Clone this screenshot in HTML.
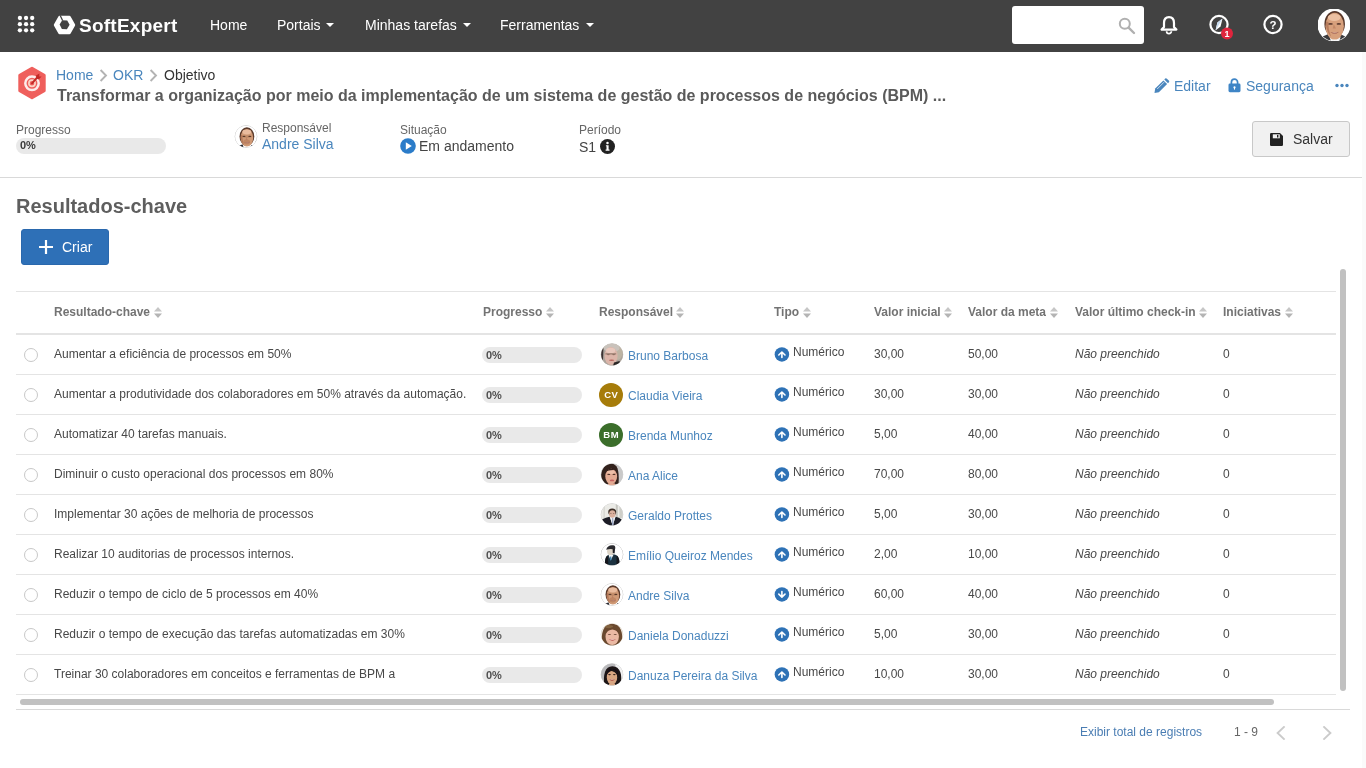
<!DOCTYPE html>
<html lang="pt-BR">
<head>
<meta charset="utf-8">
<title>OKR - Objetivo</title>
<style>
*{box-sizing:border-box;margin:0;padding:0}
html,body{width:1366px;height:768px;overflow:hidden;background:#fff}
body{font-family:"Liberation Sans",sans-serif;color:#444;font-size:12px;position:relative;will-change:transform}
a{text-decoration:none;color:#4a86bd}
.abs{position:absolute;white-space:nowrap}
#nav{position:absolute;left:0;top:0;width:1366px;height:52px;background:#424242}
#nav .mi{position:absolute;top:17px;font-size:14px;line-height:16px;color:#fff;white-space:nowrap}
#nav .caret{position:absolute;top:23px;width:0;height:0;border-left:4px solid transparent;border-right:4px solid transparent;border-top:4px solid #fff}
#brand{position:absolute;left:79px;top:14px;font-size:19px;line-height:24px;font-weight:bold;color:#fff;letter-spacing:0.25px}
#search{position:absolute;left:1012px;top:6px;width:132px;height:38px;background:#fff;border-radius:3px}
.lbl{position:absolute;font-size:12px;line-height:14px;color:#666;white-space:nowrap}
.val{position:absolute;font-size:14px;line-height:16px;color:#444;white-space:nowrap}
.pbar{position:absolute;height:16px;border-radius:8px;background:#e9e9e9;font-size:11px;font-weight:bold;line-height:16px;color:#505050;padding-left:4px}
#hsep{position:absolute;left:0;top:177px;width:1366px;height:1px;background:#d9d9d9}
.hl{position:absolute;left:16px;width:1320px;height:1px;background:#e4e4e4}
.th{position:absolute;top:305px;font-size:12px;line-height:14px;font-weight:bold;color:#737373;white-space:nowrap}
.sort{position:absolute;top:307px;width:8px;height:11px}
.row{position:absolute;left:16px;width:1320px;height:40px}
.row .c{position:absolute;top:12px;font-size:12px;line-height:14px;color:#484848;white-space:nowrap}
.row .radio{position:absolute;left:8px;top:13px;width:14px;height:14px;border:1px solid #c8c8c8;border-radius:50%;background:#fff}
.row .pbar{left:466px;top:12px;width:100px}
.row .av{position:absolute;left:584px;top:8px;width:24px;height:24px}
.row .ini{left:583px}
.row .ini{border-radius:50%;color:#fff;font-weight:bold;font-size:9.5px;letter-spacing:0.5px;padding-left:0.5px;line-height:24px;text-align:center}
.row .nm{position:absolute;left:612px;top:14px;font-size:12px;line-height:14px;color:#4a86bd;white-space:nowrap}
.row .ti{position:absolute;left:758px;top:12px;width:16px;height:16px}
.row .tt{position:absolute;left:777px;top:10px;font-size:12px;line-height:14px;color:#484848}
</style>
</head>
<body>
<div id="nav">
  <svg class="abs" style="left:17px;top:15px" width="18" height="18" viewBox="0 0 18 18"><g fill="#fff"><circle cx="2.9" cy="3.0" r="2.15"/><circle cx="9.05" cy="3.0" r="2.15"/><circle cx="15.200000000000001" cy="3.0" r="2.15"/><circle cx="2.9" cy="9.15" r="2.15"/><circle cx="9.05" cy="9.15" r="2.15"/><circle cx="15.200000000000001" cy="9.15" r="2.15"/><circle cx="2.9" cy="15.3" r="2.15"/><circle cx="9.05" cy="15.3" r="2.15"/><circle cx="15.200000000000001" cy="15.3" r="2.15"/></g></svg>
  <svg class="abs" style="left:53px;top:15px" width="23" height="20" viewBox="0 0 23 20"><path d="M6.6 0.8 L16.4 0.8 Q17.2 0.8 17.6 1.5 L22 9.3 Q22.4 10 22 10.7 L17.6 18.5 Q17.2 19.2 16.4 19.2 L6.6 19.2 Q5.8 19.2 5.4 18.5 L1 10.7 Q0.6 10 1 9.3 L5.4 1.5 Q5.8 0.8 6.6 0.8 Z" fill="#fff"/><path d="M9.2 5.3 L14.2 5.5 L16.6 9.8 L13.9 14.2 L8.9 14 L6.6 9.6 Z" fill="#424242"/><path d="M7.2 0.4 L9.6 5.6" stroke="#424242" stroke-width="1.3"/></svg>
  <div id="brand">SoftExpert</div>
  <div class="mi" style="left:210px">Home</div>
  <div class="mi" style="left:277px">Portais</div><div class="caret" style="left:326px"></div>
  <div class="mi" style="left:365px">Minhas tarefas</div><div class="caret" style="left:463px"></div>
  <div class="mi" style="left:500px">Ferramentas</div><div class="caret" style="left:586px"></div>
  <div id="search"><svg class="abs" style="left:106px;top:11px" width="18" height="18" viewBox="0 0 18 18"><circle cx="6.8" cy="6.8" r="5" fill="none" stroke="#b0b0b0" stroke-width="2"/><path d="M10.6 10.6 L16 16" stroke="#b0b0b0" stroke-width="2.4" stroke-linecap="round"/></svg></div>
  <svg class="abs" style="left:1159px;top:15px" width="20" height="21" viewBox="0 0 20 21"><path d="M10 2.2 C6.6 2.2 5 4.8 5 8 L5 12 L2.6 14.6 L17.4 14.6 L15 12 L15 8 C15 4.8 13.4 2.2 10 2.2 Z" fill="none" stroke="#fff" stroke-width="2.2" stroke-linejoin="round"/><path d="M7.6 16.2 A2.4 2.4 0 0 0 12.4 16.2" fill="none" stroke="#fff" stroke-width="1.7"/></svg>
  <svg class="abs" style="left:1208px;top:14px" width="26" height="26" viewBox="0 0 26 26"><circle cx="11" cy="10.5" r="8.6" fill="none" stroke="#fff" stroke-width="2.2"/><path d="M14.5 4.5 L12.6 12.4 L7.5 16.5 L9.4 8.6 Z" fill="#fff"/><path d="M14.5 4.5 L7.5 16.5 L9.4 8.6 Z" fill="#c4d9ee"/><circle cx="19" cy="19.6" r="6" fill="#e0243d"/><text x="19" y="22.9" font-family="Liberation Sans" font-weight="bold" font-size="9" fill="#fff" text-anchor="middle">1</text></svg>
  <svg class="abs" style="left:1262px;top:14px" width="22" height="22" viewBox="0 0 22 22"><circle cx="11" cy="10.5" r="8.6" fill="none" stroke="#fff" stroke-width="2.2"/><text x="11" y="14.6" font-family="Liberation Sans" font-weight="bold" font-size="11.5" fill="#fff" text-anchor="middle">?</text></svg>
  <svg class="abs" style="left:1318px;top:9px" width="32" height="32" viewBox="0 0 24 24"><defs><clipPath id="knav"><circle cx="12" cy="12" r="11.9"/></clipPath><filter id="fnav" x="-10%" y="-10%" width="120%" height="120%"><feGaussianBlur stdDeviation="0.42"/></filter></defs><circle cx="12" cy="12" r="11.9" fill="#fff" stroke="#fff" stroke-width="1"/><g clip-path="url(#knav)"><g filter="url(#fnav)"><rect width="24" height="24" fill="#fff"/><path d="M2 24 L3.4 20.6 L8.4 18.6 L10.2 24 Z" fill="#3a3a3e"/><path d="M22 24 L20.8 20.8 L17 19 L15.6 24 Z" fill="#3a3a3e"/><path d="M8.6 20.6 L12.4 24 L17 20.8 L16 24 L9.6 24 Z" fill="#f4f4f4"/><ellipse cx="12.5" cy="11.3" rx="7.7" ry="9.8" fill="#57372a"/><ellipse cx="12.5" cy="12.9" rx="6.9" ry="10" fill="#d7a07c"/><ellipse cx="12.2" cy="6.4" rx="4.8" ry="2.6" fill="#ecc0a2"/><path d="M6 9.6 C5.8 14 7 18 9.8 20.6 C8.2 17 7.8 13.4 7.8 9.6 Z" fill="#a8694c" opacity="0.65"/><ellipse cx="9.4" cy="11.2" rx="1.7" ry="0.65" fill="#4a2c22" opacity="0.85"/><ellipse cx="15.6" cy="11.2" rx="1.7" ry="0.65" fill="#4a2c22" opacity="0.85"/><path d="M11.8 11.4 L11.1 14.6 L13.5 14.6 Z" fill="#b87858" opacity="0.6"/><path d="M9.2 17.3 Q12.6 19.8 15.8 17.1 Q12.6 18.4 9.2 17.3 Z" fill="#8c4038"/><path d="M10 17.7 Q12.6 18.7 15 17.6 Q12.6 18 10 17.7 Z" fill="#f6ece6"/></g></g></svg>
</div>
<svg class="abs" style="left:17px;top:66px" width="30" height="34" viewBox="0 0 30 34"><path d="M15 2.2 L27.2 9.3 L27.2 24.7 L15 31.8 L2.8 24.7 L2.8 9.3 Z" fill="#ef5f5c" stroke="#ef5f5c" stroke-width="3" stroke-linejoin="round"/><circle cx="15" cy="17.3" r="6.7" fill="none" stroke="#fdeceb" stroke-width="2.5"/><circle cx="15" cy="17.3" r="3.1" fill="none" stroke="#fbd5c6" stroke-width="1.7"/><path d="M15 17.3 L20.6 11" stroke="#c22a26" stroke-width="1.9" stroke-linecap="round"/><path d="M19 9.6 L22.4 7.6 L22.2 10.4 L24.6 10.6 L21.6 13.6 L19.6 12.6 Z" fill="#c22a26"/></svg>
<div class="abs" style="left:56px;top:67px;font-size:14px;line-height:16px"><a>Home</a></div>
<svg class="abs" style="left:99px;top:69px" width="9" height="13" viewBox="0 0 9 13"><path d="M1.6 1 L7 6.5 L1.6 12" fill="none" stroke="#b3b3b3" stroke-width="1.9"/></svg>
<div class="abs" style="left:113px;top:67px;font-size:14px;line-height:16px"><a>OKR</a></div>
<svg class="abs" style="left:149px;top:69px" width="9" height="13" viewBox="0 0 9 13"><path d="M1.6 1 L7 6.5 L1.6 12" fill="none" stroke="#b3b3b3" stroke-width="1.9"/></svg>
<div class="abs" style="left:164px;top:67px;font-size:14px;line-height:16px;color:#333">Objetivo</div>
<div class="abs" style="left:57px;top:86px;font-size:16px;line-height:19px;font-weight:bold;color:#5a5a5a">Transformar a organização por meio da implementação de um sistema de gestão de processos de negócios (BPM) ...</div>
<svg class="abs" style="left:1154px;top:78px" width="16" height="16" viewBox="0 0 16 16"><path d="M0.5 15 L1.2 10.6 L9.4 2.4 L13.1 6.1 L4.9 14.3 Z" fill="#4a86bd"/><path d="M10.3 1.5 L11.2 0.6 Q12 -0.1 12.9 0.7 L14.8 2.6 Q15.6 3.4 14.9 4.3 L14 5.2 Z" fill="#4a86bd"/><path d="M3.2 11 L10 4.2" stroke="#dbe7f3" stroke-width="0.9"/></svg>
<div class="abs" style="left:1174px;top:78px;font-size:14px;line-height:16px"><a>Editar</a></div>
<svg class="abs" style="left:1228px;top:77px" width="13" height="16" viewBox="0 0 13 16"><path d="M3.4 7 L3.4 5.2 A3.1 3.1 0 0 1 9.6 5.2 L9.6 7" fill="none" stroke="#3f85c6" stroke-width="1.7"/><rect x="0.5" y="6.6" width="12" height="8.6" rx="1.4" fill="#3f85c6"/><circle cx="6.5" cy="10.4" r="1.1" fill="#fff"/><rect x="6" y="10.4" width="1" height="2.2" fill="#fff"/></svg>
<div class="abs" style="left:1246px;top:78px;font-size:14px;line-height:16px"><a>Segurança</a></div>
<svg class="abs" style="left:1335px;top:83px" width="14" height="5" viewBox="0 0 14 5"><circle cx="2" cy="2.5" r="1.7" fill="#4a86bd"/><circle cx="7" cy="2.5" r="1.7" fill="#4a86bd"/><circle cx="12" cy="2.5" r="1.7" fill="#4a86bd"/></svg>
<div class="lbl" style="left:16px;top:123px">Progresso</div>
<div class="pbar" style="left:16px;top:138px;width:150px;line-height:15px;color:#3a3a3a">0%</div>
<svg class="abs" style="left:234px;top:125px" width="24" height="24" viewBox="0 0 24 24"><defs><clipPath id="khdr"><circle cx="12" cy="11.5" r="10.8"/></clipPath><filter id="fhdr" x="-10%" y="-10%" width="120%" height="120%"><feGaussianBlur stdDeviation="0.5"/></filter></defs><circle cx="12" cy="11.5" r="10.8" fill="#fff" stroke="#c2c2c2" stroke-width="1"/><g clip-path="url(#khdr)"><g filter="url(#fhdr)"><rect width="24" height="24" fill="#fff"/><path d="M3 24 L3.6 21.6 L8.6 19.2 L10 24 Z" fill="#2a2c33"/><path d="M21.5 24 L21 21.8 L17.4 20 L16.6 24 Z" fill="#2a2c33"/><ellipse cx="12.9" cy="11.4" rx="7.4" ry="9.2" fill="#5a3a2c"/><ellipse cx="12.9" cy="12.8" rx="6.3" ry="8.8" fill="#d09a76"/><ellipse cx="12.8" cy="7" rx="4.4" ry="2.4" fill="#eabc9e"/><ellipse cx="12.9" cy="11.6" rx="5.2" ry="1.3" fill="#8a5638" opacity="0.22"/><ellipse cx="12.6" cy="17" rx="3.4" ry="2.4" fill="#a8684a" opacity="0.4"/><path d="M6.8 10 C6.6 14 7.6 18.4 10.4 21 C8.8 17.4 8.4 13.6 8.4 10 Z" fill="#a8694c" opacity="0.7"/><ellipse cx="10.0" cy="11.4" rx="1.5" ry="0.6" fill="#4a2c22" opacity="0.85"/><ellipse cx="15.8" cy="11.4" rx="1.5" ry="0.6" fill="#4a2c22" opacity="0.85"/><path d="M12.3 12 L11.6 15 L13.8 15 Z" fill="#b87858" opacity="0.6"/><path d="M9.9 16.9 Q13 19.2 16.1 16.7 Q13 18 9.9 16.9 Z" fill="#8c4038"/><path d="M10.6 17.3 Q13 18.2 15.4 17.2 Q13 17.6 10.6 17.3 Z" fill="#f2e4dc"/></g></g></svg>
<div class="lbl" style="left:262px;top:121px">Responsável</div>
<div class="val" style="left:262px;top:136px"><a>Andre Silva</a></div>
<div class="lbl" style="left:400px;top:123px">Situação</div>
<svg class="abs" style="left:400px;top:138px" width="16" height="16" viewBox="0 0 16 16"><circle cx="8" cy="8" r="7.8" fill="#2b7cc9"/><path d="M5.8 4.2 L11.8 8 L5.8 11.8 Z" fill="#fff"/></svg>
<div class="val" style="left:419px;top:138px">Em andamento</div>
<div class="lbl" style="left:579px;top:123px">Período</div>
<div class="val" style="left:579px;top:139px">S1</div>
<svg class="abs" style="left:600px;top:139px" width="15" height="15" viewBox="0 0 15 15"><circle cx="7.5" cy="7.5" r="7.5" fill="#222"/><circle cx="7.5" cy="3.9" r="1.25" fill="#fff"/><path d="M5.9 6.2 L8.6 6.2 L8.6 10.6 L9.5 10.6 L9.5 11.7 L5.6 11.7 L5.6 10.6 L6.5 10.6 L6.5 7.3 L5.9 7.3 Z" fill="#fff"/></svg>
<div class="abs" style="left:1252px;top:121px;width:98px;height:36px;border:1px solid #c8c8c8;border-radius:3px;background:#f1f1f1"></div>
<svg class="abs" style="left:1270px;top:133px" width="13" height="13" viewBox="0 0 13 13"><path d="M1.2 0 L10 0 L13 3 L13 11.8 Q13 13 11.8 13 L1.2 13 Q0 13 0 11.8 L0 1.2 Q0 0 1.2 0 Z" fill="#222"/><rect x="2.8" y="1.3" width="7" height="4" fill="#f1f1f1"/><rect x="7" y="1.9" width="1.4" height="2.6" fill="#222"/></svg>
<div class="abs" style="left:1293px;top:131px;font-size:14px;line-height:16px;color:#333">Salvar</div>
<div id="hsep"></div>
<div class="abs" style="left:16px;top:194px;font-size:20px;line-height:24px;font-weight:bold;color:#5e5e5e">Resultados-chave</div>
<div class="abs" style="left:21px;top:229px;width:88px;height:36px;background:#2e70b7;border:1px solid #2a68ad;border-radius:3px"></div>
<svg class="abs" style="left:39px;top:240px" width="14" height="14" viewBox="0 0 14 14"><path d="M7 0 L7 14 M0 7 L14 7" stroke="#fff" stroke-width="2.2"/></svg>
<div class="abs" style="left:62px;top:239px;font-size:14px;line-height:16px;color:#fff">Criar</div>
<div class="hl" style="top:291px"></div>
<div class="th" style="left:54px">Resultado-chave</div><svg class="sort" style="left:154px" viewBox="0 0 8 11"><path d="M4 0 L8 4.5 L0 4.5 Z" fill="#c6c6c6"/><path d="M4 11 L8 6.5 L0 6.5 Z" fill="#b4b4b4"/></svg>
<div class="th" style="left:483px">Progresso</div><svg class="sort" style="left:546px" viewBox="0 0 8 11"><path d="M4 0 L8 4.5 L0 4.5 Z" fill="#c6c6c6"/><path d="M4 11 L8 6.5 L0 6.5 Z" fill="#b4b4b4"/></svg>
<div class="th" style="left:599px">Responsável</div><svg class="sort" style="left:676px" viewBox="0 0 8 11"><path d="M4 0 L8 4.5 L0 4.5 Z" fill="#c6c6c6"/><path d="M4 11 L8 6.5 L0 6.5 Z" fill="#b4b4b4"/></svg>
<div class="th" style="left:774px">Tipo</div><svg class="sort" style="left:803px" viewBox="0 0 8 11"><path d="M4 0 L8 4.5 L0 4.5 Z" fill="#c6c6c6"/><path d="M4 11 L8 6.5 L0 6.5 Z" fill="#b4b4b4"/></svg>
<div class="th" style="left:874px">Valor inicial</div><svg class="sort" style="left:944px" viewBox="0 0 8 11"><path d="M4 0 L8 4.5 L0 4.5 Z" fill="#c6c6c6"/><path d="M4 11 L8 6.5 L0 6.5 Z" fill="#b4b4b4"/></svg>
<div class="th" style="left:968px">Valor da meta</div><svg class="sort" style="left:1050px" viewBox="0 0 8 11"><path d="M4 0 L8 4.5 L0 4.5 Z" fill="#c6c6c6"/><path d="M4 11 L8 6.5 L0 6.5 Z" fill="#b4b4b4"/></svg>
<div class="th" style="left:1075px">Valor último check-in</div><svg class="sort" style="left:1199px" viewBox="0 0 8 11"><path d="M4 0 L8 4.5 L0 4.5 Z" fill="#c6c6c6"/><path d="M4 11 L8 6.5 L0 6.5 Z" fill="#b4b4b4"/></svg>
<div class="th" style="left:1223px">Iniciativas</div><svg class="sort" style="left:1285px" viewBox="0 0 8 11"><path d="M4 0 L8 4.5 L0 4.5 Z" fill="#c6c6c6"/><path d="M4 11 L8 6.5 L0 6.5 Z" fill="#b4b4b4"/></svg>
<div class="hl" style="top:333px;height:2px"></div>
<div class="row" style="top:335px"><div class="radio"></div><div class="c" style="left:38px">Aumentar a eficiência de processos em 50%</div><div class="pbar">0%</div><svg class="av" style="" width="24" height="24" viewBox="0 0 24 24"><defs><clipPath id="kr1"><circle cx="12" cy="11.5" r="10.8"/></clipPath><filter id="fr1" x="-10%" y="-10%" width="120%" height="120%"><feGaussianBlur stdDeviation="0.55"/></filter></defs><circle cx="12" cy="11.5" r="10.8" fill="#aaa39b" stroke="#cfcac4" stroke-width="1"/><g clip-path="url(#kr1)"><g filter="url(#fr1)"><rect width="24" height="24" fill="#aaa39b"/><path d="M0 3 L3.4 5 L3 17 L0 20 Z" fill="#3a3232"/><ellipse cx="17.6" cy="9" rx="5" ry="8" fill="#bdb4a4"/><ellipse cx="11.6" cy="5" rx="8" ry="4.4" fill="#c9c2bb"/><ellipse cx="11" cy="13" rx="6.6" ry="9" fill="#dcb5a9"/><ellipse cx="10.6" cy="7.4" rx="4.6" ry="2.6" fill="#e8c8bd"/><path d="M14 19.6 L19.6 18 L21 23 L13 23 Z" fill="#2c2525"/><path d="M5.4 10.9 L16.2 10.9" stroke="#6e5a4c" stroke-width="0.9" opacity="0.85"/><ellipse cx="8.3" cy="11.6" rx="1.5" ry="0.7" fill="#7a5e50" opacity="0.7"/><ellipse cx="13.7" cy="11.6" rx="1.5" ry="0.7" fill="#7a5e50" opacity="0.7"/><ellipse cx="11.6" cy="17.2" rx="2.6" ry="0.8" fill="#b0524e" opacity="0.8"/></g></g></svg><div class="nm">Bruno Barbosa</div><svg class="ti" viewBox="0 0 16 16"><circle cx="7.9" cy="7.4" r="7.25" fill="#2e72b6"/><path d="M7.9 10.5 L7.9 5.6 M4.8 8 L7.9 5 L11 8" fill="none" stroke="#fff" stroke-width="1.6" stroke-linecap="round" stroke-linejoin="round"/></svg><div class="tt">Numérico</div><div class="c" style="left:858px">30,00</div><div class="c" style="left:952px">50,00</div><div class="c" style="left:1059px;font-style:italic">Não preenchido</div><div class="c" style="left:1207px">0</div></div>
<div class="hl" style="top:374px"></div>
<div class="row" style="top:375px"><div class="radio"></div><div class="c" style="left:38px">Aumentar a produtividade dos colaboradores em 50% através da automação.</div><div class="pbar">0%</div><div class="av ini" style="background:#a67c0a">CV</div><div class="nm">Claudia Vieira</div><svg class="ti" viewBox="0 0 16 16"><circle cx="7.9" cy="7.4" r="7.25" fill="#2e72b6"/><path d="M7.9 10.5 L7.9 5.6 M4.8 8 L7.9 5 L11 8" fill="none" stroke="#fff" stroke-width="1.6" stroke-linecap="round" stroke-linejoin="round"/></svg><div class="tt">Numérico</div><div class="c" style="left:858px">30,00</div><div class="c" style="left:952px">30,00</div><div class="c" style="left:1059px;font-style:italic">Não preenchido</div><div class="c" style="left:1207px">0</div></div>
<div class="hl" style="top:414px"></div>
<div class="row" style="top:415px"><div class="radio"></div><div class="c" style="left:38px">Automatizar 40 tarefas manuais.</div><div class="pbar">0%</div><div class="av ini" style="background:#3b6e2b">BM</div><div class="nm">Brenda Munhoz</div><svg class="ti" viewBox="0 0 16 16"><circle cx="7.9" cy="7.4" r="7.25" fill="#2e72b6"/><path d="M7.9 10.5 L7.9 5.6 M4.8 8 L7.9 5 L11 8" fill="none" stroke="#fff" stroke-width="1.6" stroke-linecap="round" stroke-linejoin="round"/></svg><div class="tt">Numérico</div><div class="c" style="left:858px">5,00</div><div class="c" style="left:952px">40,00</div><div class="c" style="left:1059px;font-style:italic">Não preenchido</div><div class="c" style="left:1207px">0</div></div>
<div class="hl" style="top:454px"></div>
<div class="row" style="top:455px"><div class="radio"></div><div class="c" style="left:38px">Diminuir o custo operacional dos processos em 80%</div><div class="pbar">0%</div><svg class="av" style="" width="24" height="24" viewBox="0 0 24 24"><defs><clipPath id="kr4"><circle cx="12" cy="11.5" r="10.8"/></clipPath><filter id="fr4" x="-10%" y="-10%" width="120%" height="120%"><feGaussianBlur stdDeviation="0.5"/></filter></defs><circle cx="12" cy="11.5" r="10.8" fill="#c9c9c9" stroke="#d2d2d2" stroke-width="1"/><g clip-path="url(#kr4)"><g filter="url(#fr4)"><rect width="24" height="24" fill="#c9c9c9"/><rect x="0" y="20.6" width="24" height="4" fill="#f6f6f6"/><path d="M1 21 C-0.5 10 3 0.6 11.4 0.8 C17 1 19.4 6 18.6 20.6 L15 21.4 L5 21.4 Z" fill="#33201c"/><ellipse cx="11.2" cy="13.6" rx="5.9" ry="7.8" fill="#e3aa92"/><ellipse cx="11" cy="9" rx="3.8" ry="2" fill="#eebfa8"/><path d="M5 9.4 C7 5.4 12 4.6 16.8 7.6 C14 6.6 8 7 5 9.4 Z" fill="#33201c"/><ellipse cx="8.8" cy="11.4" rx="1.5" ry="0.6" fill="#3a2018" opacity="0.85"/><ellipse cx="14.0" cy="11.4" rx="1.5" ry="0.6" fill="#3a2018" opacity="0.85"/><ellipse cx="12" cy="17.4" rx="2.2" ry="0.9" fill="#c25a5c" opacity="0.9"/><rect x="8" y="20.4" width="7" height="2.4" fill="#e3aa92"/></g></g></svg><div class="nm">Ana Alice</div><svg class="ti" viewBox="0 0 16 16"><circle cx="7.9" cy="7.4" r="7.25" fill="#2e72b6"/><path d="M7.9 10.5 L7.9 5.6 M4.8 8 L7.9 5 L11 8" fill="none" stroke="#fff" stroke-width="1.6" stroke-linecap="round" stroke-linejoin="round"/></svg><div class="tt">Numérico</div><div class="c" style="left:858px">70,00</div><div class="c" style="left:952px">80,00</div><div class="c" style="left:1059px;font-style:italic">Não preenchido</div><div class="c" style="left:1207px">0</div></div>
<div class="hl" style="top:494px"></div>
<div class="row" style="top:495px"><div class="radio"></div><div class="c" style="left:38px">Implementar 30 ações de melhoria de processos</div><div class="pbar">0%</div><svg class="av" style="" width="24" height="24" viewBox="0 0 24 24"><defs><clipPath id="kr5"><circle cx="12" cy="11.5" r="10.8"/></clipPath><filter id="fr5" x="-10%" y="-10%" width="120%" height="120%"><feGaussianBlur stdDeviation="0.45"/></filter></defs><circle cx="12" cy="11.5" r="10.8" fill="#ebebe7" stroke="#cfcfcf" stroke-width="1"/><g clip-path="url(#kr5)"><g filter="url(#fr5)"><rect width="24" height="24" fill="#ebebe7"/><rect x="15.8" y="0" width="2" height="15" fill="#c6c6c0"/><rect x="19.4" y="0" width="3.4" height="15" fill="#cfcfc9"/><rect x="3.4" y="0" width="1.6" height="15" fill="#dadad5"/><path d="M1.4 24 L1.8 16.6 Q6 14.2 9.6 13.8 L12.6 22 L15.6 13.8 Q19 14.4 22 16.8 L22.6 24 Z" fill="#1b1e26"/><path d="M10 13.8 L12.7 23 L15.4 13.8 Z" fill="#eef0f4"/><path d="M12.2 15 L13.2 15 L13.6 22 L12.7 23 L11.9 22 Z" fill="#9aa6c4"/><ellipse cx="12.2" cy="9" rx="4" ry="3.6" fill="#3d2f28"/><ellipse cx="12.3" cy="11" rx="3.2" ry="3.8" fill="#dbb09e"/><ellipse cx="10.9" cy="10.6" rx="0.8" ry="0.4" fill="#3a2a24" opacity="0.7"/><ellipse cx="13.700000000000001" cy="10.6" rx="0.8" ry="0.4" fill="#3a2a24" opacity="0.7"/></g></g></svg><div class="nm">Geraldo Prottes</div><svg class="ti" viewBox="0 0 16 16"><circle cx="7.9" cy="7.4" r="7.25" fill="#2e72b6"/><path d="M7.9 10.5 L7.9 5.6 M4.8 8 L7.9 5 L11 8" fill="none" stroke="#fff" stroke-width="1.6" stroke-linecap="round" stroke-linejoin="round"/></svg><div class="tt">Numérico</div><div class="c" style="left:858px">5,00</div><div class="c" style="left:952px">30,00</div><div class="c" style="left:1059px;font-style:italic">Não preenchido</div><div class="c" style="left:1207px">0</div></div>
<div class="hl" style="top:534px"></div>
<div class="row" style="top:535px"><div class="radio"></div><div class="c" style="left:38px">Realizar 10 auditorias de processos internos.</div><div class="pbar">0%</div><svg class="av" style="" width="24" height="24" viewBox="0 0 24 24"><defs><clipPath id="kr6"><circle cx="12" cy="11.5" r="10.8"/></clipPath><filter id="fr6" x="-10%" y="-10%" width="120%" height="120%"><feGaussianBlur stdDeviation="0.42"/></filter></defs><circle cx="12" cy="11.5" r="10.8" fill="#fff" stroke="#b4b4b4" stroke-width="1"/><g clip-path="url(#kr6)"><g filter="url(#fr6)"><rect width="24" height="24" fill="#fff"/><path d="M5 22.4 C4.6 16 6 12.4 9.4 11.6 L14.6 11.6 C18.4 12.6 19.8 16 19.4 22.4 Z" fill="#1c3340"/><path d="M5 22.4 C4.8 17 5.6 13.6 7.8 12.4 L8.4 22.4 Z" fill="#14181c"/><path d="M19.4 22.4 C19.6 17 18.8 14 16.6 12.6 L16.4 22.4 Z" fill="#14181c"/><path d="M8.6 12 L10.6 17.4 L13.4 12 Z" fill="#f2f5f7"/><path d="M10.1 13.4 L11.3 13.4 L11.6 16.8 L10.7 17.6 L9.9 16.6 Z" fill="#3f82ad"/><ellipse cx="10.4" cy="8.4" rx="3.3" ry="3.6" fill="#ddd5c8"/><path d="M12.6 5.6 L15 6 L14.6 10.6 L12.8 10 Z" fill="#1e1e22"/><path d="M6.2 6.8 C7 2.6 11 1.4 14.2 2.6 C15.6 3.4 15.6 5.8 14.8 7 C12 5.6 9 6 6.2 6.8 Z" fill="#2a2a2f"/></g></g></svg><div class="nm">Emílio Queiroz Mendes</div><svg class="ti" viewBox="0 0 16 16"><circle cx="7.9" cy="7.4" r="7.25" fill="#2e72b6"/><path d="M7.9 10.5 L7.9 5.6 M4.8 8 L7.9 5 L11 8" fill="none" stroke="#fff" stroke-width="1.6" stroke-linecap="round" stroke-linejoin="round"/></svg><div class="tt">Numérico</div><div class="c" style="left:858px">2,00</div><div class="c" style="left:952px">10,00</div><div class="c" style="left:1059px;font-style:italic">Não preenchido</div><div class="c" style="left:1207px">0</div></div>
<div class="hl" style="top:574px"></div>
<div class="row" style="top:575px"><div class="radio"></div><div class="c" style="left:38px">Reduzir o tempo de ciclo de 5 processos em 40%</div><div class="pbar">0%</div><svg class="av" style="" width="24" height="24" viewBox="0 0 24 24"><defs><clipPath id="kr7"><circle cx="12" cy="11.5" r="10.8"/></clipPath><filter id="fr7" x="-10%" y="-10%" width="120%" height="120%"><feGaussianBlur stdDeviation="0.5"/></filter></defs><circle cx="12" cy="11.5" r="10.8" fill="#fff" stroke="#c2c2c2" stroke-width="1"/><g clip-path="url(#kr7)"><g filter="url(#fr7)"><rect width="24" height="24" fill="#fff"/><path d="M3 24 L3.6 21.6 L8.6 19.2 L10 24 Z" fill="#2a2c33"/><path d="M21.5 24 L21 21.8 L17.4 20 L16.6 24 Z" fill="#2a2c33"/><ellipse cx="12.9" cy="11.4" rx="7.4" ry="9.2" fill="#5a3a2c"/><ellipse cx="12.9" cy="12.8" rx="6.3" ry="8.8" fill="#d09a76"/><ellipse cx="12.8" cy="7" rx="4.4" ry="2.4" fill="#eabc9e"/><ellipse cx="12.9" cy="11.6" rx="5.2" ry="1.3" fill="#8a5638" opacity="0.22"/><ellipse cx="12.6" cy="17" rx="3.4" ry="2.4" fill="#a8684a" opacity="0.4"/><path d="M6.8 10 C6.6 14 7.6 18.4 10.4 21 C8.8 17.4 8.4 13.6 8.4 10 Z" fill="#a8694c" opacity="0.7"/><ellipse cx="10.0" cy="11.4" rx="1.5" ry="0.6" fill="#4a2c22" opacity="0.85"/><ellipse cx="15.8" cy="11.4" rx="1.5" ry="0.6" fill="#4a2c22" opacity="0.85"/><path d="M12.3 12 L11.6 15 L13.8 15 Z" fill="#b87858" opacity="0.6"/><path d="M9.9 16.9 Q13 19.2 16.1 16.7 Q13 18 9.9 16.9 Z" fill="#8c4038"/><path d="M10.6 17.3 Q13 18.2 15.4 17.2 Q13 17.6 10.6 17.3 Z" fill="#f2e4dc"/></g></g></svg><div class="nm">Andre Silva</div><svg class="ti" viewBox="0 0 16 16"><circle cx="7.9" cy="7.4" r="7.25" fill="#2e72b6"/><path d="M7.9 4.6 L7.9 9.5 M4.8 7.1 L7.9 10.1 L11 7.1" fill="none" stroke="#fff" stroke-width="1.6" stroke-linecap="round" stroke-linejoin="round"/></svg><div class="tt">Numérico</div><div class="c" style="left:858px">60,00</div><div class="c" style="left:952px">40,00</div><div class="c" style="left:1059px;font-style:italic">Não preenchido</div><div class="c" style="left:1207px">0</div></div>
<div class="hl" style="top:614px"></div>
<div class="row" style="top:615px"><div class="radio"></div><div class="c" style="left:38px">Reduzir o tempo de execução das tarefas automatizadas em 30%</div><div class="pbar">0%</div><svg class="av" style="" width="24" height="24" viewBox="0 0 24 24"><defs><clipPath id="kr8"><circle cx="12" cy="11.5" r="10.8"/></clipPath><filter id="fr8" x="-10%" y="-10%" width="120%" height="120%"><feGaussianBlur stdDeviation="0.5"/></filter></defs><circle cx="12" cy="11.5" r="10.8" fill="#efe9df" stroke="#dcd6cc" stroke-width="1"/><g clip-path="url(#kr8)"><g filter="url(#fr8)"><rect width="24" height="24" fill="#efe9df"/><path d="M2 22 C0.6 10 3.6 0.8 12.2 0.8 C20.6 0.8 23.4 10 22 21 L18 23 L6 23 Z" fill="#6a482f"/><ellipse cx="9" cy="3.6" rx="4" ry="1.6" fill="#8a6a44" opacity="0.8"/><ellipse cx="12.2" cy="13.8" rx="6.7" ry="8.3" fill="#eab9a3"/><path d="M5.4 11 C6 6.4 10.4 4.4 12.6 4.6 C15 4.6 19 6.6 19.2 11.4 C17.6 8 15 6.6 12.4 6.4 C9.4 6.6 7 8 5.4 11 Z" fill="#6a482f"/><ellipse cx="9.4" cy="11.5" rx="1.6" ry="0.6" fill="#5a3828" opacity="0.8"/><ellipse cx="15.200000000000001" cy="11.5" rx="1.6" ry="0.6" fill="#5a3828" opacity="0.8"/><path d="M8.8 16 Q12.4 19.6 16 16 Q12.4 17 8.8 16 Z" fill="#b44a4a"/><path d="M9.8 16.3 Q12.4 17.6 15 16.3 Q12.4 16.6 9.8 16.3 Z" fill="#fdf6f2"/></g></g></svg><div class="nm">Daniela Donaduzzi</div><svg class="ti" viewBox="0 0 16 16"><circle cx="7.9" cy="7.4" r="7.25" fill="#2e72b6"/><path d="M7.9 10.5 L7.9 5.6 M4.8 8 L7.9 5 L11 8" fill="none" stroke="#fff" stroke-width="1.6" stroke-linecap="round" stroke-linejoin="round"/></svg><div class="tt">Numérico</div><div class="c" style="left:858px">5,00</div><div class="c" style="left:952px">30,00</div><div class="c" style="left:1059px;font-style:italic">Não preenchido</div><div class="c" style="left:1207px">0</div></div>
<div class="hl" style="top:654px"></div>
<div class="row" style="top:655px"><div class="radio"></div><div class="c" style="left:38px">Treinar 30 colaboradores em conceitos e ferramentas de BPM a</div><div class="pbar">0%</div><svg class="av" style="" width="24" height="24" viewBox="0 0 24 24"><defs><clipPath id="kr9"><circle cx="12" cy="11.5" r="10.8"/></clipPath><filter id="fr9" x="-10%" y="-10%" width="120%" height="120%"><feGaussianBlur stdDeviation="0.5"/></filter></defs><circle cx="12" cy="11.5" r="10.8" fill="#b9b9bb" stroke="#cfcfcf" stroke-width="1"/><g clip-path="url(#kr9)"><g filter="url(#fr9)"><rect width="24" height="24" fill="#b9b9bb"/><path d="M15 0 L24 0 L24 24 L19 24 Z" fill="#f2f2f2"/><path d="M4.6 23 C2.6 12 5 3.2 12.4 3.2 C20.4 3.4 22.6 12 20.6 22 L16 23 L8 23 Z" fill="#1a1216"/><ellipse cx="12" cy="14.4" rx="5.2" ry="7.2" fill="#d8a682"/><path d="M6.6 12 C7 7 11 5.6 13.6 6 C17 6.6 18.4 10 18 14 C16.6 10 14 8.6 11.6 8 C9.6 8.6 7.6 10 6.6 12 Z" fill="#1a1216"/><ellipse cx="9.5" cy="11.6" rx="1.4" ry="0.6" fill="#20120e" opacity="0.9"/><ellipse cx="14.3" cy="11.6" rx="1.4" ry="0.6" fill="#20120e" opacity="0.9"/><path d="M9.4 16.2 Q12 19.4 14.8 16.2 Q12 17 9.4 16.2 Z" fill="#a8483e"/><path d="M10.2 16.5 Q12 17.7 14 16.5 Q12 16.8 10.2 16.5 Z" fill="#fff"/><rect x="9" y="20.6" width="6" height="3" fill="#d8a682"/></g></g></svg><div class="nm">Danuza Pereira da Silva</div><svg class="ti" viewBox="0 0 16 16"><circle cx="7.9" cy="7.4" r="7.25" fill="#2e72b6"/><path d="M7.9 10.5 L7.9 5.6 M4.8 8 L7.9 5 L11 8" fill="none" stroke="#fff" stroke-width="1.6" stroke-linecap="round" stroke-linejoin="round"/></svg><div class="tt">Numérico</div><div class="c" style="left:858px">10,00</div><div class="c" style="left:952px">30,00</div><div class="c" style="left:1059px;font-style:italic">Não preenchido</div><div class="c" style="left:1207px">0</div></div>
<div class="hl" style="top:694px"></div>
<div class="abs" style="left:1362px;top:52px;width:4px;height:716px;background:#fafafa"></div>
<div class="abs" style="left:20px;top:699px;width:1254px;height:6px;border-radius:3px;background:#c1c1c1"></div>
<div class="abs" style="left:1340px;top:269px;width:6px;height:422px;border-radius:3px;background:#c1c1c1"></div>
<div class="abs" style="left:16px;top:709px;width:1334px;height:1px;background:#d9d9d9"></div>
<div class="abs" style="left:1080px;top:725px;font-size:12px;line-height:14px"><a style="color:#4a7db3">Exibir total de registros</a></div>
<div class="abs" style="left:1234px;top:725px;font-size:12px;line-height:14px;color:#666">1 - 9</div>
<svg class="abs" style="left:1276px;top:726px" width="10" height="14" viewBox="0 0 10 14"><path d="M8.6 0.4 L1.6 7 L8.6 13.6" fill="none" stroke="#cbcbcb" stroke-width="1.9"/></svg>
<svg class="abs" style="left:1322px;top:726px" width="10" height="14" viewBox="0 0 10 14"><path d="M1.4 0.4 L8.4 7 L1.4 13.6" fill="none" stroke="#cbcbcb" stroke-width="1.9"/></svg>
</body>
</html>
